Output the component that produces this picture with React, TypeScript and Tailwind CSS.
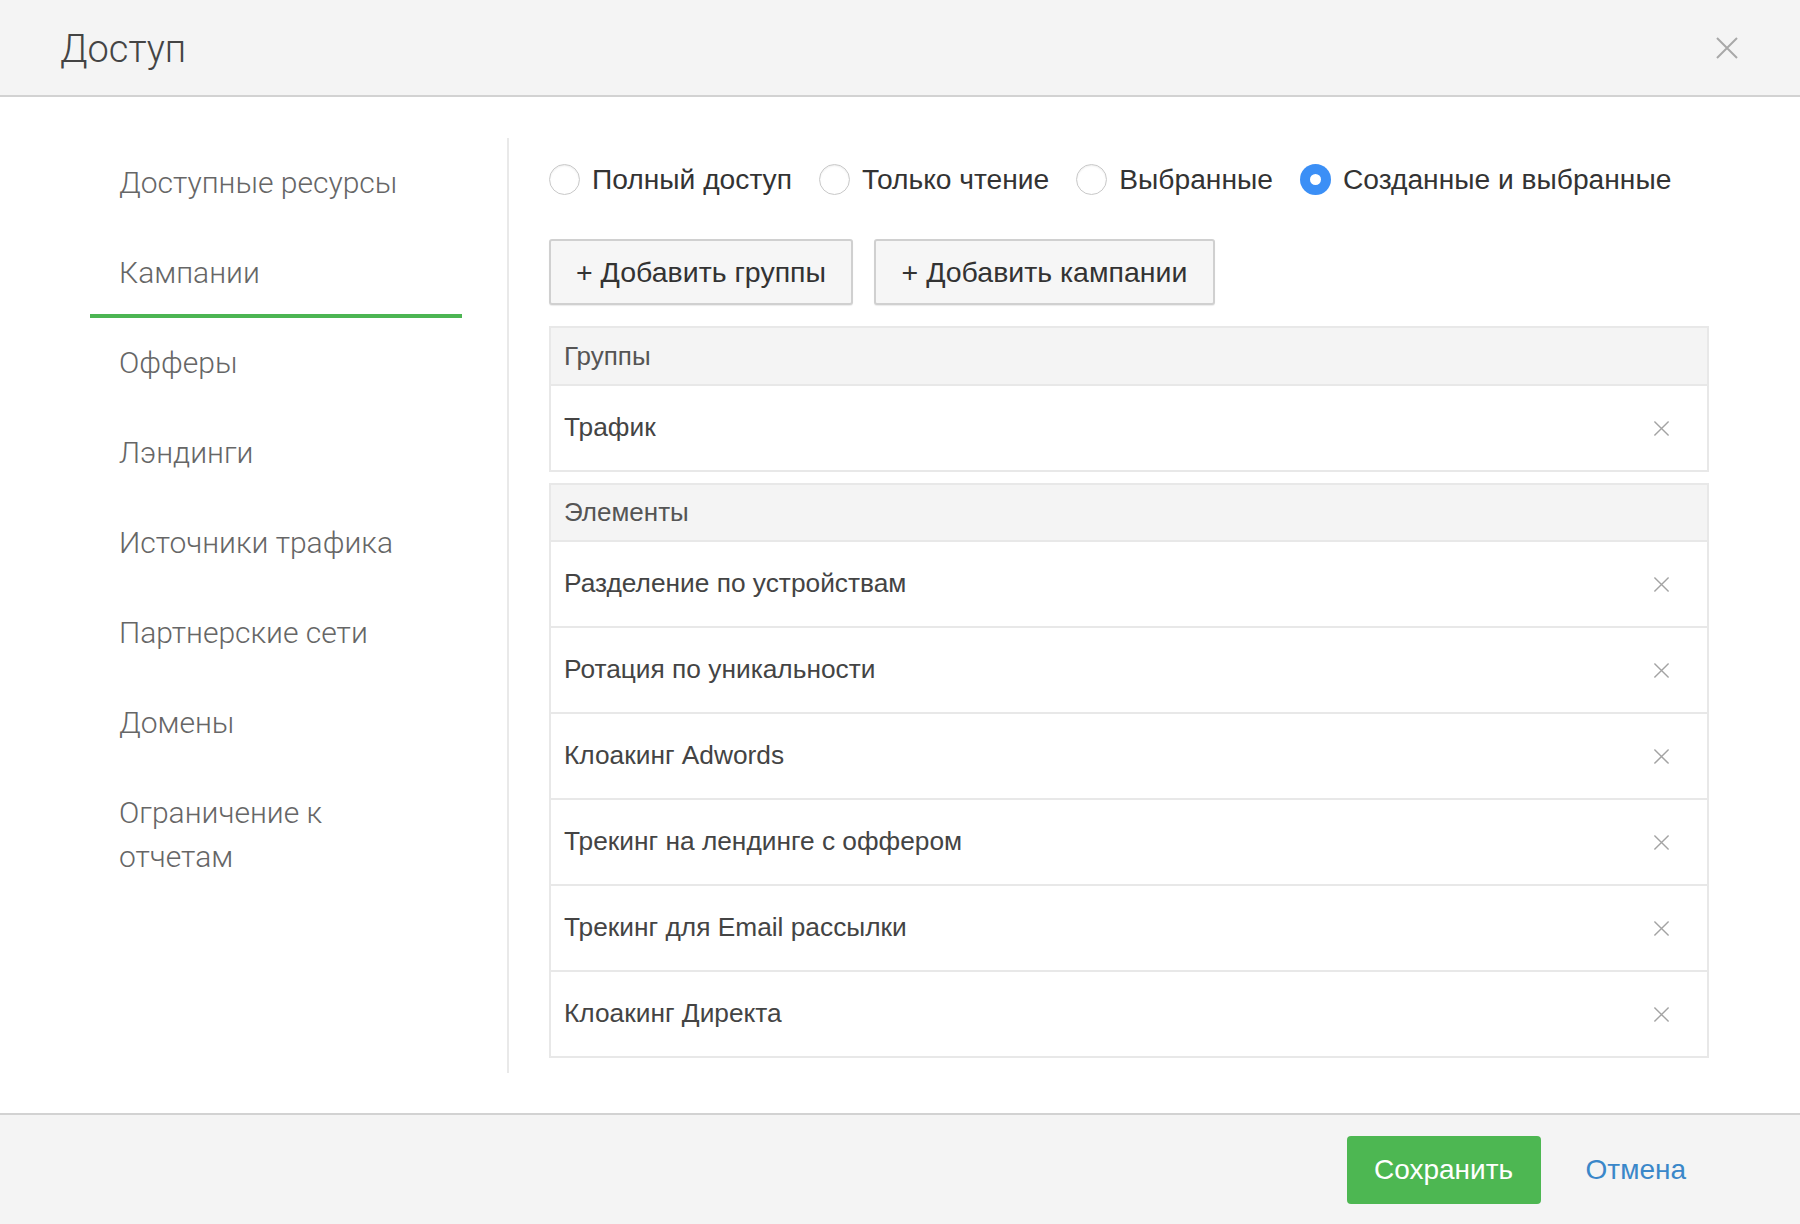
const NAV = [
  "Доступные ресурсы",
  "Кампании",
  "Офферы",
  "Лэндинги",
  "Источники трафика",
  "Партнерские сети",
  "Домены",
  "Ограничение к отчетам",
];

const RADIOS = [
  { label: "Полный доступ", checked: false },
  { label: "Только чтение", checked: false },
  { label: "Выбранные", checked: false },
  { label: "Созданные и выбранные", checked: true },
];

const ELEMENTS = [
  "Разделение по устройствам",
  "Ротация по уникальности",
  "Клоакинг Adwords",
  "Трекинг на лендинге с оффером",
  "Трекинг для Email рассылки",
  "Клоакинг Директа",
];

function Cross({ size, className = "" }: { size: number; className?: string }) {
  return (
    <svg width={size} height={size} viewBox="0 0 24 24" className={className} fill="none">
      <path d="M2 2 L22 22 M22 2 L2 22" stroke="currentColor" strokeWidth="2" />
    </svg>
  );
}

function Radio({ checked }: { checked: boolean }) {
  if (checked) {
    return (
      <span className="flex h-[31px] w-[31px] items-center justify-center rounded-full bg-[#3b8ff6]">
        <span className="h-[11px] w-[11px] rounded-full bg-white" />
      </span>
    );
  }
  return (
    <span className="h-[31px] w-[31px] rounded-full border-[1.5px] border-[#c9c9c9] bg-white shadow-[inset_0_1px_2px_rgba(0,0,0,0.08)]" />
  );
}

function Row({ label, last }: { label: string; last?: boolean }) {
  return (
    <div
      className={`flex items-center justify-between pl-[13px] pr-[37px] text-[26.3px] text-[#444] ${
        last ? "h-[84px]" : "h-[86px] border-b-2 border-[#e8e8e8]"
      }`}
    >
      <span>{label}</span>
      <Cross size={17} className="text-[#a3a3a3]" />
    </div>
  );
}

export default function App() {
  return (
    <div className="flex h-[1224px] w-full flex-col bg-white font-['Liberation_Sans',Arial,sans-serif]">
      <header className="flex h-[97px] shrink-0 items-center justify-between border-b-2 border-[#d2d2d2] bg-[#f4f4f4] pl-[60px] pr-[61px]">
        <h1 className="mt-[4px] font-['Roboto',sans-serif] text-[38px] font-light text-[#444]">Доступ</h1>
        <Cross size={24} className="text-[#a8a8a8]" />
      </header>

      <div className="flex flex-1 pt-[41px] pb-[40px]">
        <nav className="w-[509px] shrink-0 border-r-2 border-[#e9e9e9] pl-[90px] pr-[45px] font-['Roboto',sans-serif] text-[30px] font-light text-[#666]">
          {NAV.map((item) => (
            <div
              key={item}
              className={`px-[29px] pt-[23px] leading-[44px] ${
                item === "Кампании" ? "border-b-4 border-[#4cb553] pb-[19px]" : "pb-[23px]"
              }`}
            >
              {item}
            </div>
          ))}
        </nav>

        <main className="flex-1 pl-[40px] pr-[91px] pt-[20px]">
          <div className="flex h-[42px] items-center">
            {RADIOS.map((r) => (
              <label key={r.label} className="mr-[27px] flex items-center gap-[12px] text-[28.2px] text-[#333]">
                <Radio checked={r.checked} />
                <span>{r.label}</span>
              </label>
            ))}
          </div>

          <div className="mt-[39px] flex gap-[21px]">
            <button className="h-[66px] w-[304px] rounded-[3px] border-2 border-[#d0d0d0] bg-[#f6f6f6] text-[28.5px] text-[#333] shadow-[0_1px_1px_rgba(0,0,0,0.08)]">
              + Добавить группы
            </button>
            <button className="h-[66px] w-[341px] rounded-[3px] border-2 border-[#d0d0d0] bg-[#f6f6f6] text-[28.5px] text-[#333] shadow-[0_1px_1px_rgba(0,0,0,0.08)]">
              + Добавить кампании
            </button>
          </div>

          <section className="mt-[21px] border-2 border-[#e8e8e8]">
            <div className="flex h-[58px] items-center border-b-2 border-[#e8e8e8] bg-[#f4f4f4] pl-[13px] text-[26px] text-[#555]">
              Группы
            </div>
            <Row label="Трафик" last />
          </section>

          <section className="mt-[11px] border-2 border-[#e8e8e8]">
            <div className="flex h-[57px] items-center border-b-2 border-[#e8e8e8] bg-[#f4f4f4] pl-[13px] text-[26px] text-[#555]">
              Элементы
            </div>
            {ELEMENTS.map((e, i) => (
              <Row key={e} label={e} last={i === ELEMENTS.length - 1} />
            ))}
          </section>
        </main>
      </div>

      <footer className="flex h-[111px] shrink-0 items-start justify-end border-t-2 border-[#d2d2d2] bg-[#f4f4f4] pr-[114px] pt-[21px]">
        <button className="h-[68px] w-[194px] rounded-[4px] bg-[#4db752] text-[28px] text-white">Сохранить</button>
        <button className="ml-[45px] h-[68px] text-[28px] text-[#3a87c9]">Отмена</button>
      </footer>
    </div>
  );
}
